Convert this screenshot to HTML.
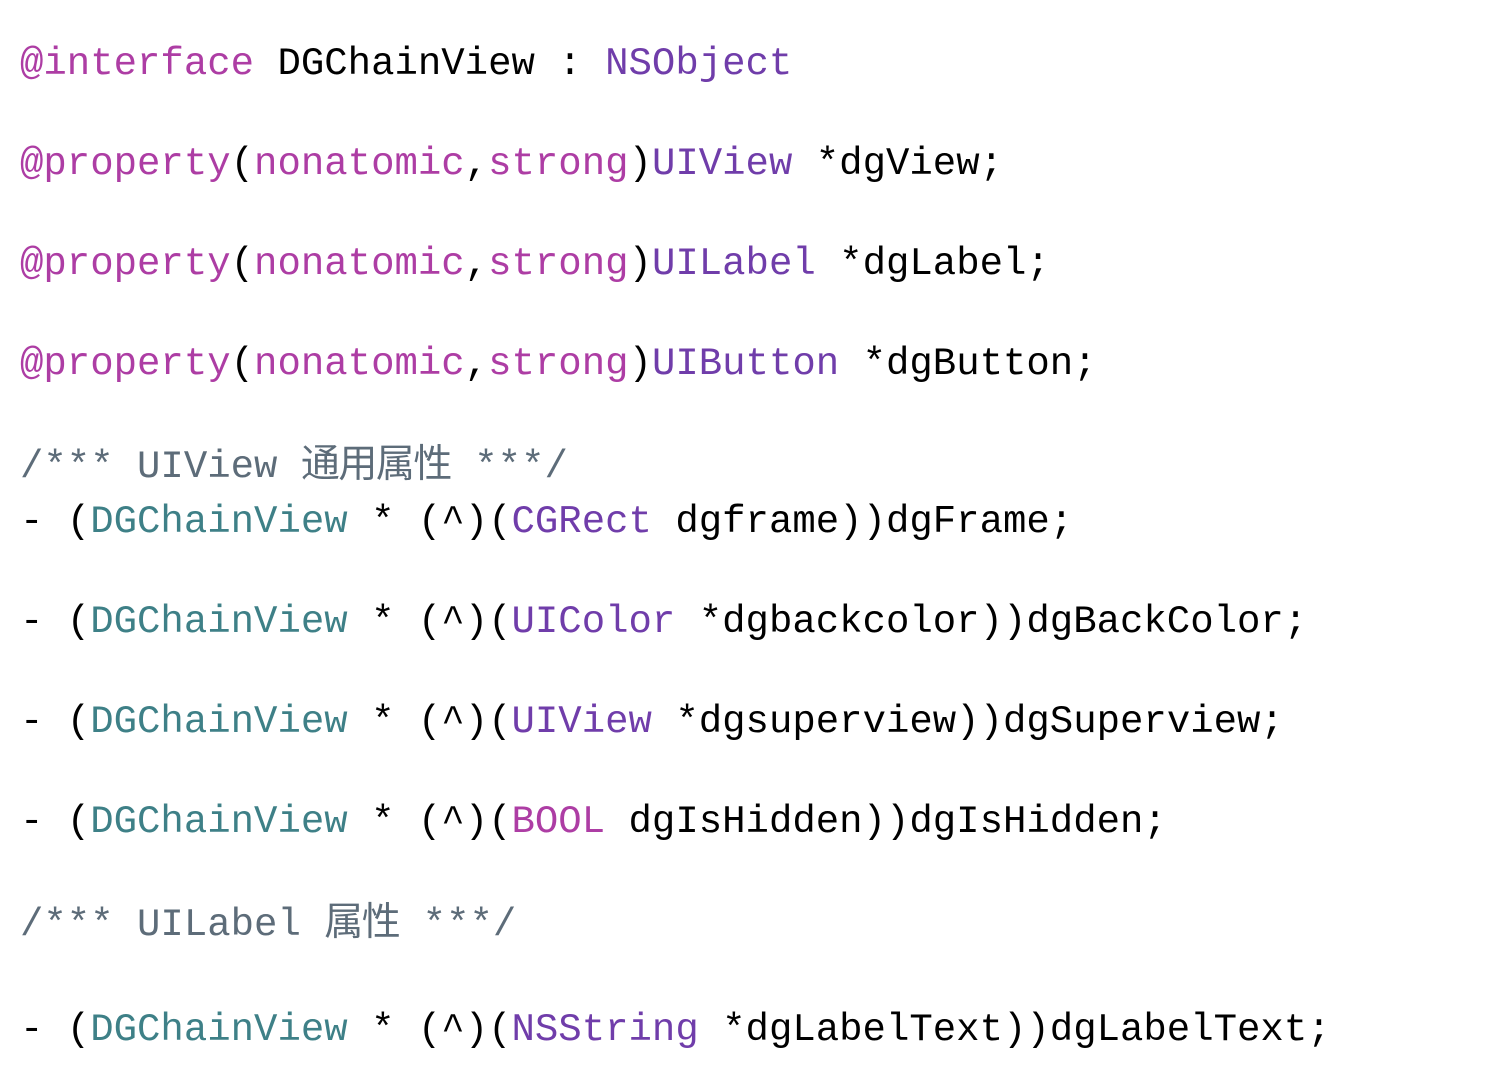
<!DOCTYPE html>
<html><head><meta charset="utf-8"><style>
body{margin:0;width:1498px;height:1066px;background:#fff;overflow:hidden;}
.l{position:absolute;left:20px;height:50px;line-height:50px;white-space:pre;font-family:"Liberation Mono","Noto Sans CJK SC",monospace;font-size:39px;color:#000;}
.k{color:#AD3DA4}.t{color:#703DAA}.c{color:#3E8087}.g{color:#5D6C79}
.z{letter-spacing:-1.5px}
</style></head><body>
<div class="l" style="top:39px"><span class="k">@interface</span> DGChainView : <span class="t">NSObject</span></div>
<div class="l" style="top:139px"><span class="k">@property</span>(<span class="k">nonatomic</span>,<span class="k">strong</span>)<span class="t">UIView</span> *dgView;</div>
<div class="l" style="top:239px"><span class="k">@property</span>(<span class="k">nonatomic</span>,<span class="k">strong</span>)<span class="t">UILabel</span> *dgLabel;</div>
<div class="l" style="top:339px"><span class="k">@property</span>(<span class="k">nonatomic</span>,<span class="k">strong</span>)<span class="t">UIButton</span> *dgButton;</div>
<div class="l g" style="top:442px">/*** UIView <span class="z">通用属性</span> ***/</div>
<div class="l" style="top:497px">- (<span class="c">DGChainView</span> * (^)(<span class="t">CGRect</span> dgframe))dgFrame;</div>
<div class="l" style="top:597px">- (<span class="c">DGChainView</span> * (^)(<span class="t">UIColor</span> *dgbackcolor))dgBackColor;</div>
<div class="l" style="top:697px">- (<span class="c">DGChainView</span> * (^)(<span class="t">UIView</span> *dgsuperview))dgSuperview;</div>
<div class="l" style="top:797px">- (<span class="c">DGChainView</span> * (^)(<span class="k">BOOL</span> dgIsHidden))dgIsHidden;</div>
<div class="l g" style="top:900px">/*** UILabel <span class="z">属性</span> ***/</div>
<div class="l" style="top:1005px">- (<span class="c">DGChainView</span> * (^)(<span class="t">NSString</span> *dgLabelText))dgLabelText;</div>
</body></html>
